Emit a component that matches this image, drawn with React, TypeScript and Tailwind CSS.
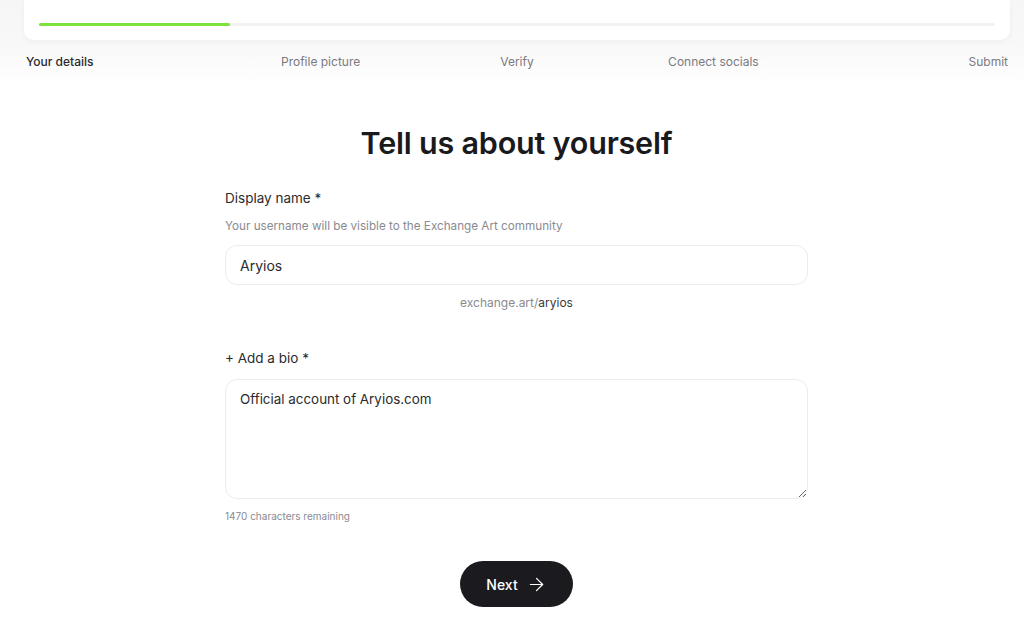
import React from "react";
import { ArrowRight } from "lucide-react";

const steps = ["Your details", "Profile picture", "Verify", "Connect socials", "Submit"];

export default function App() {
  return (
    <div className="min-h-[628px] w-full bg-white text-[#1c1c1f]" style={{ fontFamily: "Inter, 'Noto Sans', sans-serif" }}>
      <div className="h-[86px] bg-gradient-to-b from-[#f6f6f7] via-[#f8f8f9] to-white">
        <div className="ml-[24px] mr-[14px] h-[40px] rounded-b-[10px] bg-white px-[15px] pt-[23px] shadow-[0_2px_6px_rgba(0,0,0,0.04)]">
          <div className="h-[3px] w-full rounded-full bg-[#f2f2f3]">
            <div className="h-[3px] w-[20%] rounded-full bg-[#7ee23c]" />
          </div>
        </div>
        <div className="ml-[26px] mr-[16px] mt-[14px] grid grid-cols-5 text-[12px] leading-4">
          {steps.map((s, i) => (
            <div
              key={s}
              className={
                i === 0
                  ? "text-left font-medium text-[#2a2a2e]"
                  : i === 4
                  ? "text-right text-[#7a7a80]"
                  : "text-center text-[#7a7a80]"
              }
            >
              {s}
            </div>
          ))}
        </div>
      </div>

      <div className="ml-[225px] flex w-[583px] flex-col">
        <h1 className="mt-[38px] text-center text-[30.5px] font-semibold leading-[38px] tracking-[-0.2px] text-[#1a1a1d]">
          Tell us about yourself
        </h1>
        <div className="mt-[26px] text-[13.5px] leading-5 text-[#2a2a2e]">Display name *</div>
        <div className="mt-[10px] text-[11.7px] leading-4 text-[#8a8a90]">
          Your username will be visible to the Exchange Art community
        </div>
        <div className="mt-[11px] flex h-[40px] items-center rounded-[12px] border border-[#ececee] px-[14px] text-[14px] text-[#2a2a2e]">
          Aryios
        </div>
        <div className="mt-[10px] text-center text-[12px] leading-4 text-[#8a8a90]">
          exchange.art/<span className="text-[#3a3a3e]">aryios</span>
        </div>
        <div className="mt-[37px] text-[13.5px] leading-5 text-[#2a2a2e]">+ Add a bio *</div>
        <textarea
          className="mt-[11px] h-[120px] w-full rounded-[12px] border border-[#ececee] px-[14px] py-[9px] text-[13.4px] leading-5 text-[#2a2a2e] outline-none"
          defaultValue="Official account of Aryios.com"
        />
        <div className="mt-[10px] text-[10px] leading-[14px] text-[#8a8a90]">1470 characters remaining</div>
        <div className="mt-[38px] flex justify-center">
          <button className="flex h-[46px] w-[113px] items-center justify-center gap-[8px] rounded-full bg-[#1b1b1f] text-[14px] font-medium text-white">
            Next
            <ArrowRight size={21} strokeWidth={1.4} />
          </button>
        </div>
      </div>
    </div>
  );
}
